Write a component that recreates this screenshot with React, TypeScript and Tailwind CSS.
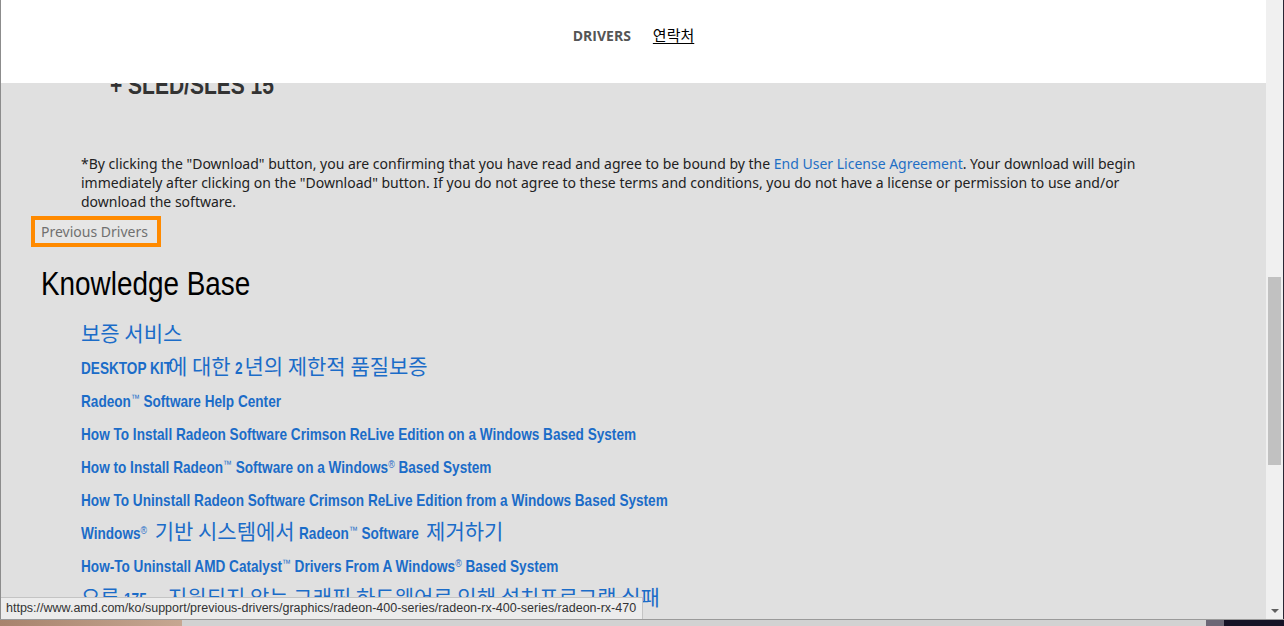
import type { ReactNode } from "react";

// no condensed face installed, so the Latin runs are squeezed to match the site's narrow font
const SQUEEZE = "inline-block origin-left scale-x-[0.8] whitespace-nowrap";

function Ko({ children }: { children: ReactNode }) {
  return (
    <span className="font-['Noto_Sans_CJK_KR',sans-serif] text-[21px] leading-none font-normal">
      {children}
    </span>
  );
}

function Tm({ children }: { children: ReactNode }) {
  return <sup className="text-[11px] font-normal">{children}</sup>;
}

const LINKS: ReactNode[] = [
  <Ko>보증 서비스</Ko>,
  <>
    <span className="inline-block w-[87px]">
      <span className={SQUEEZE}>DESKTOP KIT</span>
    </span>
    <Ko>에 대한 </Ko>
    <span className="inline-block w-[9px]">
      <span className={SQUEEZE}>2</span>
    </span>
    <Ko>년의 제한적 품질보증</Ko>
  </>,
  <span className={SQUEEZE}>
    Radeon<Tm>™</Tm> Software Help Center
  </span>,
  <span className={SQUEEZE}>How To Install Radeon Software Crimson ReLive Edition on a Windows Based System</span>,
  <span className={SQUEEZE}>
    How to Install Radeon<Tm>™</Tm> Software on a Windows<Tm>®</Tm> Based System
  </span>,
  <span className={SQUEEZE}>How To Uninstall Radeon Software Crimson ReLive Edition from a Windows Based System</span>,
  <>
    <span className="inline-block w-[69px]">
      <span className={SQUEEZE}>
        Windows<Tm>®</Tm>
      </span>
    </span>
    <Ko> 기반 시스템에서 </Ko>
    <span className="inline-block w-[122px]">
      <span className={SQUEEZE}>
        Radeon<Tm>™</Tm> Software
      </span>
    </span>
    <Ko> 제거하기</Ko>
  </>,
  <span className={SQUEEZE}>
    How-To Uninstall AMD Catalyst<Tm>™</Tm> Drivers From A Windows<Tm>®</Tm> Based System
  </span>,
  <>
    <Ko>오류 </Ko>
    <span className="inline-block w-[23px]">
      <span className={SQUEEZE}>175</span>
    </span>
    <Ko> – 지원되지 않는 그래픽 하드웨어로 인해 설치프로그램 실패</Ko>
  </>,
];

export default function App() {
  return (
    <div className="flex h-[626px] w-[1284px] flex-col overflow-hidden bg-[#161226]">
      <div className="flex h-[619px]">
        <div className="w-px bg-[#8c8c8c]" />

        <main className="relative flex flex-1 flex-col overflow-hidden bg-[#e0e0e0]">
          <header className="relative z-10 flex h-[83px] shrink-0 items-center justify-center gap-[22px] bg-white pb-[12px]">
            <span className="font-['Open_Sans',sans-serif] text-[14px] font-bold text-[#555]">
              DRIVERS
            </span>
            <span className="font-['Noto_Sans_CJK_KR',sans-serif] text-[15px] text-black underline underline-offset-2">
              연락처
            </span>
          </header>

          <div className="mt-[-13px] pl-[109px] font-['Liberation_Sans',sans-serif] text-[25px] font-bold leading-[30px] text-[#333]">
            <span className="inline-block origin-left scale-x-[0.84] whitespace-nowrap">+ SLED/SLES 15</span>
          </div>

          <p className="mt-[54px] pl-[80px] font-['Noto_Sans',sans-serif] text-[14px] leading-[19px] text-[#222]">
            *By clicking the "Download" button, you are confirming that you have read and agree to be bound by the{" "}
            <span className="text-[#1f6fc5]">End User License Agreement</span>. Your download will begin
            <br />
            immediately after clicking on the "Download" button. If you do not agree to these terms and conditions, you do not have a license or permission to use and/or
            <br />
            download the software.
          </p>

          <div className="mt-[5px] pl-[30px]">
            <span className="inline-block border-4 border-[#ff8a00] bg-[#e6e6e6] pr-[9px] pl-[6px] font-['Noto_Sans',sans-serif] text-[14px] leading-[23px] text-[#707070]">
              Previous Drivers
            </span>
          </div>

          <h1 className="mt-[16px] pl-[40px] font-['Liberation_Sans',sans-serif] text-[34px] font-normal leading-[40px] text-black">
            <span className="inline-block origin-left scale-x-[0.82] whitespace-nowrap">Knowledge Base</span>
          </h1>

          <ul className="mt-[16px] pl-[80px] font-['Liberation_Sans','Noto_Sans_CJK_KR',sans-serif] text-[17px] font-bold text-[#1b6cc8]">
            {LINKS.map((l, i) => (
              <li key={i} className="h-[33px] whitespace-nowrap leading-[33px]">
                {l}
              </li>
            ))}
          </ul>

          <div className="absolute bottom-0 left-0 flex h-[22px] w-[642px] items-center border-t border-r border-[#c4c4c4] bg-[#ececec] pl-[5px] font-['Liberation_Sans',sans-serif] text-[12.5px] text-[#333]">
            https://www.amd.com/ko/support/previous-drivers/graphics/radeon-400-series/radeon-rx-400-series/radeon-rx-470
          </div>
        </main>

        <div className="flex w-[17px] flex-col bg-[#f0f0f0]">
          <div className="h-[277px]" />
          <div className="mx-[2px] h-[188px] bg-[#c1c1c1]" />
          <div className="flex-1" />
          <div className="flex h-[17px] items-center justify-center">
            <div className="h-0 w-0 border-x-[4px] border-t-[4px] border-x-transparent border-t-[#606060]" />
          </div>
        </div>
        <div className="w-px bg-[#2a2633]" />
      </div>

      <div className="h-px bg-[#9a9a9a]" />
      <div className="flex flex-1">
        <div className="w-[182px] bg-gradient-to-r from-[#a7836d] to-[#c6a792]" />
        <div className="flex-1 bg-[#d2d2d2]" />
        <div className="w-[18px] bg-[#6c6776]" />
        <div className="w-[60px] bg-[#161226]" />
      </div>
    </div>
  );
}
